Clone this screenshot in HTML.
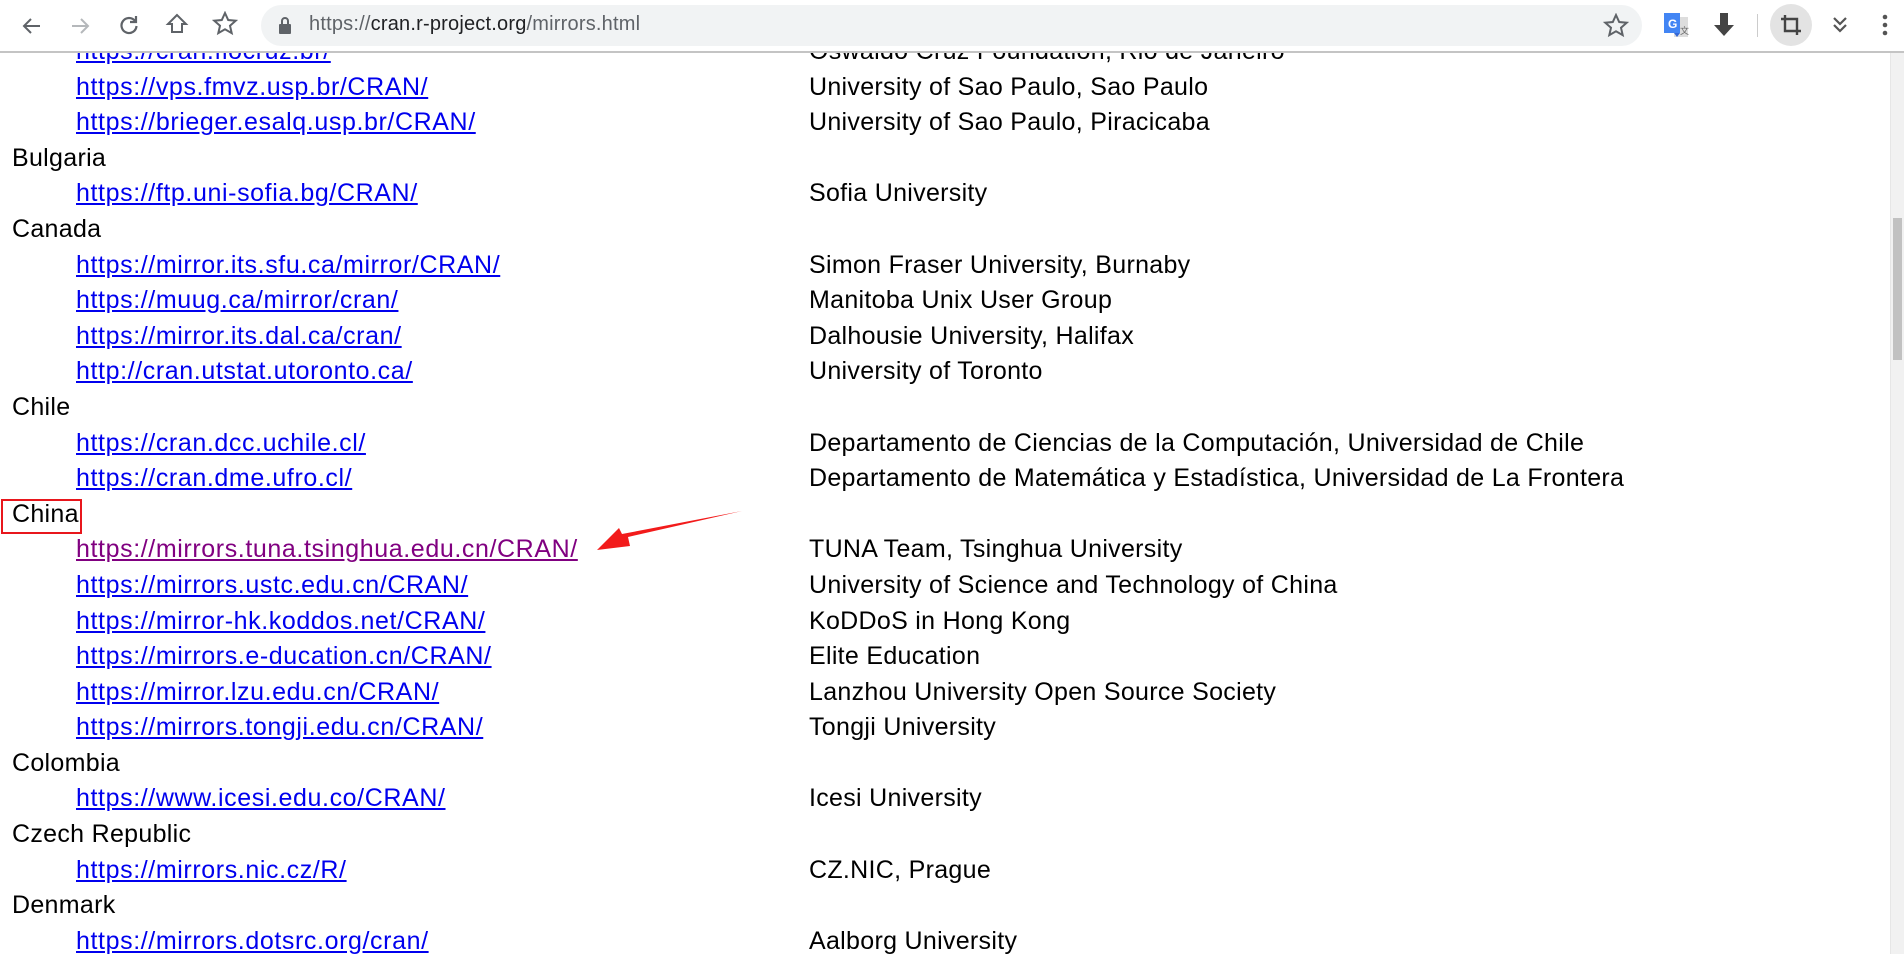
<!DOCTYPE html>
<html><head><meta charset="utf-8"><style>
*{margin:0;padding:0;box-sizing:border-box}
body{width:1904px;height:954px;overflow:hidden;background:#fff;font-family:"Liberation Sans",sans-serif;position:relative}
#bar{position:absolute;left:0;top:0;width:1904px;height:53px;background:#fff;border-bottom:2px solid #c4c4c4;z-index:5}
#pill{position:absolute;left:261px;top:5px;width:1381px;height:41px;border-radius:21px;background:#f1f3f4}
#url{position:absolute;left:309px;top:13px;font-size:20px;color:#5f6368;letter-spacing:0.2px}
#url b{font-weight:normal;color:#202124}
.ic{position:absolute}
#content{position:absolute;left:0;top:34px;width:1880px;font-size:25px;line-height:35.6px;color:#000}
.r{height:35.6px;position:relative;white-space:nowrap}
.r a{position:absolute;left:76px;color:#0000ee;text-decoration:underline;letter-spacing:0.6px}
.r a.v{color:#800080}
.r span.d{position:absolute;left:809px;letter-spacing:0.3px}
.r span.c{position:absolute;left:12px;letter-spacing:0.3px}
#sb{position:absolute;left:1890px;top:53px;width:14px;height:901px;background:#f1f1f1;border-left:1px solid #e6e6e6}
#thumb{position:absolute;left:1893px;top:218px;width:9px;height:142px;background:#c1c1c1}
#box{position:absolute;left:1px;top:499px;width:81px;height:35px;border:2px solid #e8161c}
</style></head><body>
<div id="content">
<div class="r"><a>https://cran.fiocruz.br/</a><span class="d">Oswaldo Cruz Foundation, Rio de Janeiro</span></div>
<div class="r"><a>https://vps.fmvz.usp.br/CRAN/</a><span class="d">University of Sao Paulo, Sao Paulo</span></div>
<div class="r"><a>https://brieger.esalq.usp.br/CRAN/</a><span class="d">University of Sao Paulo, Piracicaba</span></div>
<div class="r"><span class="c">Bulgaria</span></div>
<div class="r"><a>https://ftp.uni-sofia.bg/CRAN/</a><span class="d">Sofia University</span></div>
<div class="r"><span class="c">Canada</span></div>
<div class="r"><a>https://mirror.its.sfu.ca/mirror/CRAN/</a><span class="d">Simon Fraser University, Burnaby</span></div>
<div class="r"><a>https://muug.ca/mirror/cran/</a><span class="d">Manitoba Unix User Group</span></div>
<div class="r"><a>https://mirror.its.dal.ca/cran/</a><span class="d">Dalhousie University, Halifax</span></div>
<div class="r"><a>http://cran.utstat.utoronto.ca/</a><span class="d">University of Toronto</span></div>
<div class="r"><span class="c">Chile</span></div>
<div class="r"><a>https://cran.dcc.uchile.cl/</a><span class="d">Departamento de Ciencias de la Computación, Universidad de Chile</span></div>
<div class="r"><a>https://cran.dme.ufro.cl/</a><span class="d">Departamento de Matemática y Estadística, Universidad de La Frontera</span></div>
<div class="r"><span class="c">China</span></div>
<div class="r"><a class="v">https://mirrors.tuna.tsinghua.edu.cn/CRAN/</a><span class="d">TUNA Team, Tsinghua University</span></div>
<div class="r"><a>https://mirrors.ustc.edu.cn/CRAN/</a><span class="d">University of Science and Technology of China</span></div>
<div class="r"><a>https://mirror-hk.koddos.net/CRAN/</a><span class="d">KoDDoS in Hong Kong</span></div>
<div class="r"><a>https://mirrors.e-ducation.cn/CRAN/</a><span class="d">Elite Education</span></div>
<div class="r"><a>https://mirror.lzu.edu.cn/CRAN/</a><span class="d">Lanzhou University Open Source Society</span></div>
<div class="r"><a>https://mirrors.tongji.edu.cn/CRAN/</a><span class="d">Tongji University</span></div>
<div class="r"><span class="c">Colombia</span></div>
<div class="r"><a>https://www.icesi.edu.co/CRAN/</a><span class="d">Icesi University</span></div>
<div class="r"><span class="c">Czech Republic</span></div>
<div class="r"><a>https://mirrors.nic.cz/R/</a><span class="d">CZ.NIC, Prague</span></div>
<div class="r"><span class="c">Denmark</span></div>
<div class="r"><a>https://mirrors.dotsrc.org/cran/</a><span class="d">Aalborg University</span></div>
</div>
<div id="box"></div>
<svg class="ic" style="left:590px;top:508px" width="160" height="45"><polygon points="152,3 38,29 40,38 7,42 29,20 32,26" fill="#f21b1b"/></svg>
<div id="sb"></div><div id="thumb"></div>
<div id="bar">
<svg class="ic" style="left:20px;top:14px" width="24" height="24" fill="none" stroke="#5f6368" stroke-width="2"><path d="M20 12H5M11 5l-7 7 7 7"/></svg>
<svg class="ic" style="left:68px;top:14px" width="24" height="24" fill="none" stroke="#b5b8bb" stroke-width="2"><path d="M4 12h15M13 5l7 7-7 7"/></svg>
<svg class="ic" style="left:117px;top:13px" width="24" height="24" fill="none" stroke="#5f6368" stroke-width="2.2"><path d="M18 8A7.5 7.5 0 1 0 19.5 13"/><path d="M19 3v6h-6" /></svg>
<svg class="ic" style="left:165px;top:12px" width="24" height="24" fill="none" stroke="#5f6368" stroke-width="2"><path d="M12 3L3 12h4v8h10v-8h4z"/></svg>
<svg class="ic" style="left:212px;top:11px" width="26" height="26" fill="none" stroke="#5f6368" stroke-width="2"><path d="M13 2l3.2 7 7.5.7-5.7 5 1.7 7.4L13 18.3 6.3 22.1 8 14.7 2.3 9.7l7.5-.7z"/></svg>
<div id="pill"></div>
<svg class="ic" style="left:278px;top:16px" width="14" height="18" fill="#5f6368"><rect x="1" y="8" width="12" height="10" rx="1"/><path d="M4 8V5a3 3 0 0 1 6 0v3" fill="none" stroke="#5f6368" stroke-width="2"/></svg>
<div id="url">https://<b>cran.r-project.org</b>/mirrors.html</div>
<svg class="ic" style="left:1603px;top:13px" width="26" height="26" fill="none" stroke="#5f6368" stroke-width="2"><path d="M13 2l3.2 7 7.5.7-5.7 5 1.7 7.4L13 18.3 6.3 22.1 8 14.7 2.3 9.7l7.5-.7z"/></svg>
<svg class="ic" style="left:1663px;top:12px" width="28" height="28"><rect x="11" y="5" width="14" height="20" fill="#ddd"/><rect x="1" y="1" width="16" height="20" fill="#4285f4"/><polygon points="11,21 17,21 14,25" fill="#3367d6"/><text x="5" y="16" font-size="12" font-weight="bold" fill="#fff" font-family="Liberation Sans">G</text><text x="17" y="22" font-size="9" fill="#666" font-family="Liberation Sans">文</text></svg>
<svg class="ic" style="left:1711px;top:12px" width="26" height="26" fill="#444"><path d="M9 1h8v12h6L13 24 3 13h6z"/></svg>
<div class="ic" style="left:1757px;top:14px;width:1px;height:23px;background:#ccc"></div>
<div class="ic" style="left:1770px;top:4px;width:42px;height:42px;border-radius:50%;background:#e3e3e3"></div>
<svg class="ic" style="left:1779px;top:13px" width="24" height="24" fill="none" stroke="#444" stroke-width="2.4"><path d="M6 2v16h16M2 6h16v16"/></svg>
<svg class="ic" style="left:1829px;top:13px" width="22" height="24" fill="none" stroke="#555" stroke-width="2.2"><path d="M5 5l6 6 6-6M5 12l6 6 6-6"/></svg>
<svg class="ic" style="left:1880px;top:13px" width="10" height="26" fill="#555"><circle cx="5" cy="4" r="2.3"/><circle cx="5" cy="12" r="2.3"/><circle cx="5" cy="20" r="2.3"/></svg>
</div>
</body></html>
